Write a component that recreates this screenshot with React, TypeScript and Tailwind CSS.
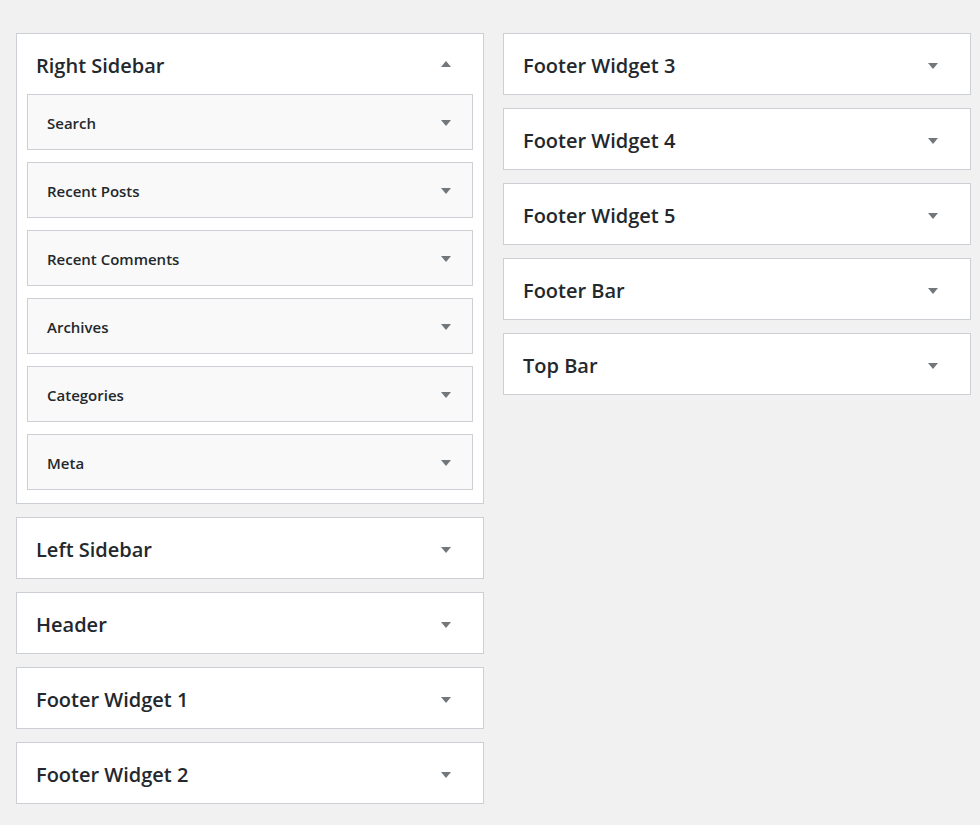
const font = { fontFamily: '"Segoe UI", "Open Sans", "Noto Sans", sans-serif' };

const Arrow = ({ up = false, className = '' }: { up?: boolean; className?: string }) => (
  <svg width="10" height="6" viewBox="0 0 10 6" className={`shrink-0 ${className}`}>
    <path d={up ? 'M0 6 L5 0 L10 6 Z' : 'M0 0 L10 0 L5 6 Z'} fill="#72777c" />
  </svg>
);

const Widget = ({ title }: { title: string }) => (
  <div className="flex h-[56px] items-center justify-between border border-[#ccd0d4] bg-[#f9f9f9] pl-[19px] pr-[21px]">
    <span className="pt-[2px] text-[15px] font-semibold text-[#23282d]">{title}</span>
    <Arrow className="mt-[2px]" />
  </div>
);

const Area = ({ title }: { title: string }) => (
  <div className="flex h-[62px] items-center justify-between border border-[#ccd0d4] bg-white pl-[19px] pr-[32px]">
    <h2 className="pt-[3px] text-[20px] font-semibold text-[#23282d]">{title}</h2>
    <Arrow className="mt-[4px]" />
  </div>
);

const widgets = ['Search', 'Recent Posts', 'Recent Comments', 'Archives', 'Categories', 'Meta'];

export default function App() {
  return (
    <div className="flex min-h-[825px] gap-[19px] bg-[#f1f1f1] pl-4 pt-[33px]" style={font}>
      <div className="flex w-[468px] flex-col gap-[13px]">
        <div className="border border-[#ccd0d4] bg-white pb-[13px]">
          <div className="flex h-[60px] items-center justify-between pl-[19px] pr-[32px]">
            <h2 className="pt-[3px] text-[20px] font-semibold text-[#23282d]">Right Sidebar</h2>
            <Arrow up />
          </div>
          <div className="flex flex-col gap-3 px-[10px]">
            {widgets.map((w) => (
              <Widget key={w} title={w} />
            ))}
          </div>
        </div>
        <Area title="Left Sidebar" />
        <Area title="Header" />
        <Area title="Footer Widget 1" />
        <Area title="Footer Widget 2" />
      </div>
      <div className="flex w-[468px] flex-col gap-[13px]">
        <Area title="Footer Widget 3" />
        <Area title="Footer Widget 4" />
        <Area title="Footer Widget 5" />
        <Area title="Footer Bar" />
        <Area title="Top Bar" />
      </div>
    </div>
  );
}
